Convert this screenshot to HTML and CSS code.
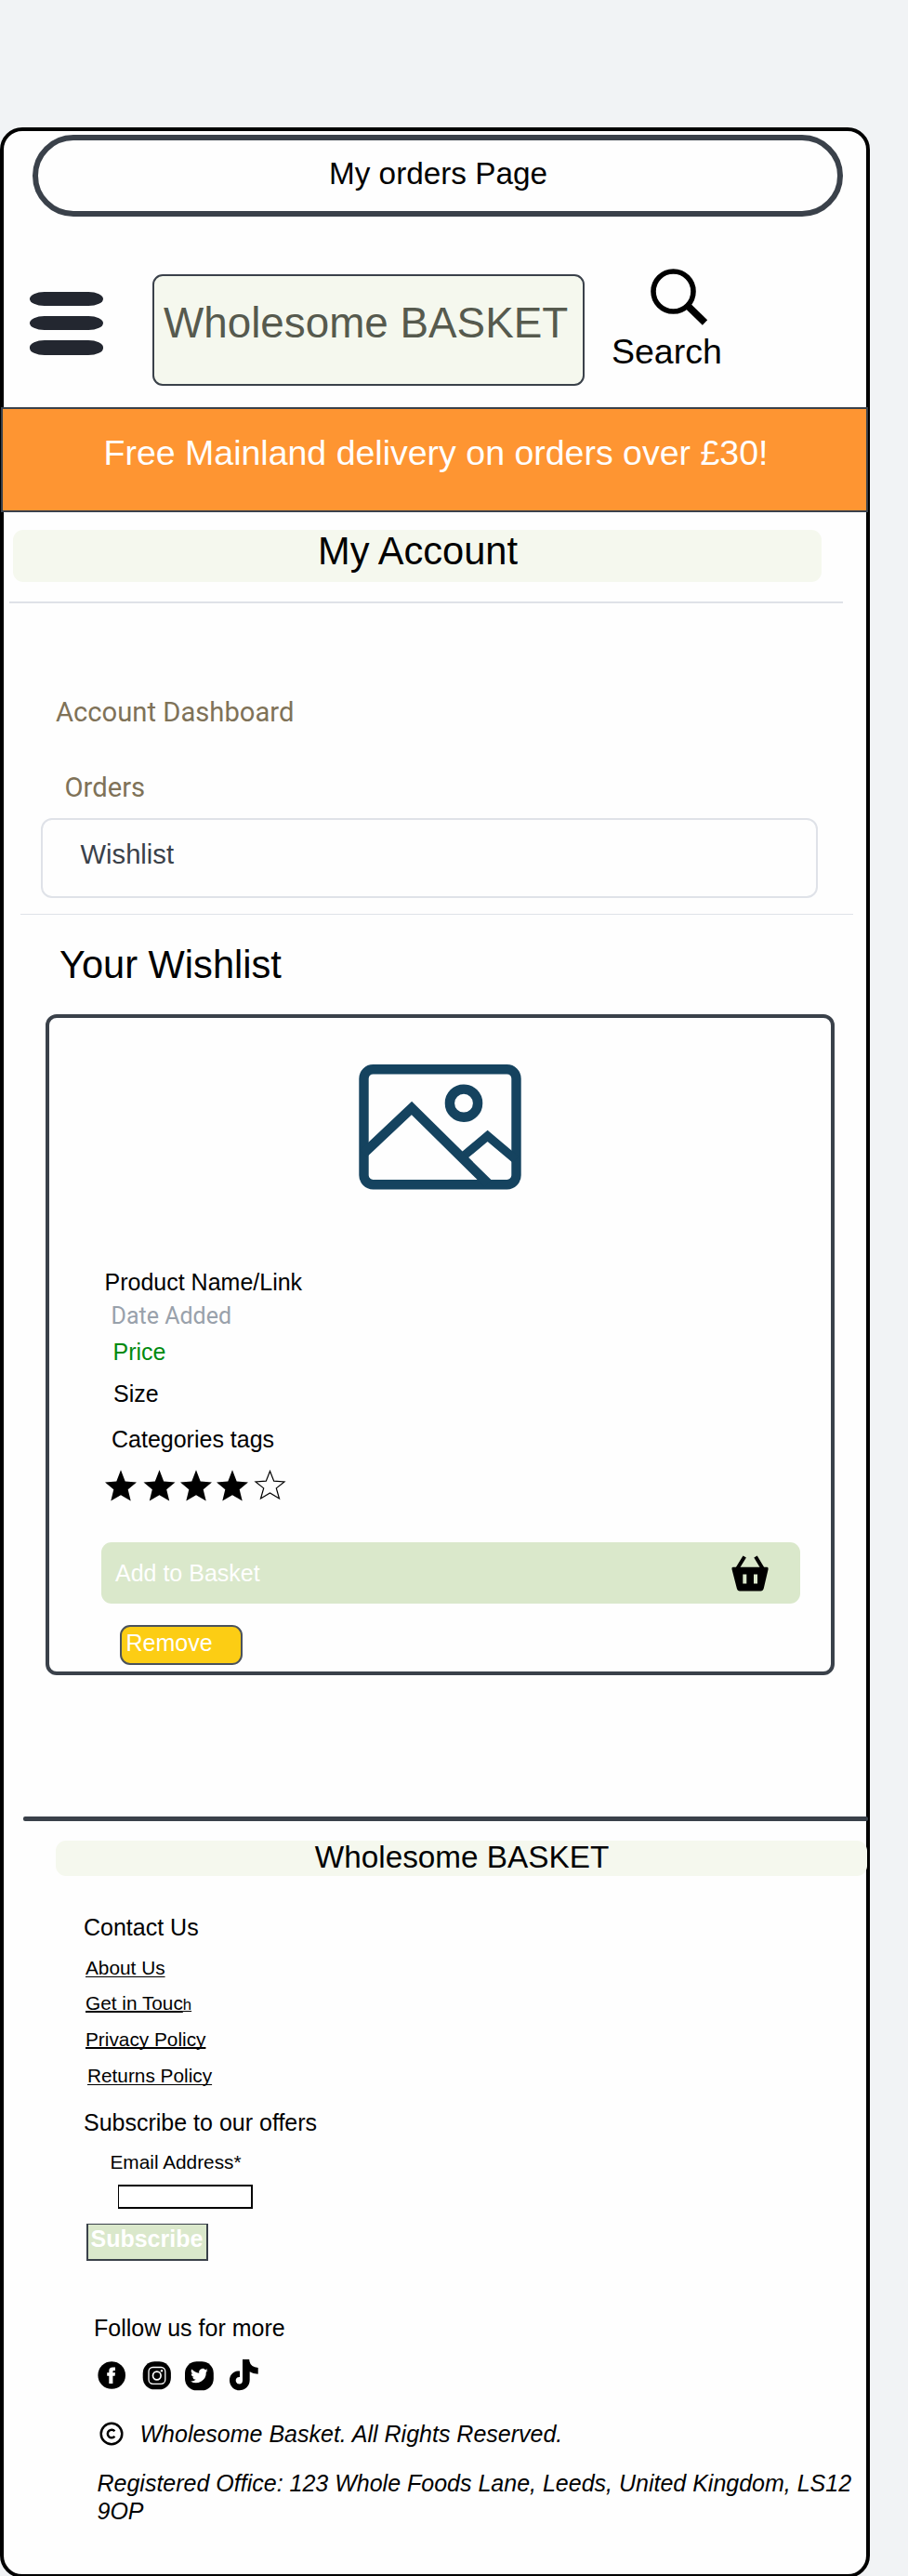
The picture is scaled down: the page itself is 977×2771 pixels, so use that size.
FILE: index.html
```html
<!DOCTYPE html>
<html lang="en">
<head>
<meta charset="utf-8">
<title>My orders Page</title>
<link rel="stylesheet" href="styles.css">
</head>
<body>
<main class="frame">
  <div class="page-title">My orders Page</div>
  <header class="header">
    <div class="menu"><span></span><span></span><span></span></div>
    <div class="brand">Wholesome BASKET</div>
    <div class="search">
      <svg class="search-icon" width="66" height="66" viewBox="0 0 66 66"><circle cx="25.500" cy="24.5" r="21.500" fill="none" stroke="#000" stroke-width="5.600"/><path d="M40 39 L59.500 58" stroke="#000" stroke-width="7.600"/></svg>
      <span>Search</span>
    </div>
  </header>
  <div class="banner">Free Mainland delivery on orders over £30!</div>
  <h1 class="account-bar">My Account</h1>
  <div class="rule rule-top"></div>
  <nav class="account-nav">
    <a class="dash">Account Dashboard</a>
    <a class="orders">Orders</a>
    <a class="current">Wishlist</a>
  </nav>
  <div class="rule rule-thin"></div>
  <h2 class="section-title">Your Wishlist</h2>
  <section class="card">
    <svg class="picture" width="175" height="135" viewBox="386 1145 175 135">
      <g fill="none" stroke="#15435f" stroke-width="10.400">
        <rect x="391.5" y="1150.2" width="164" height="124" rx="10"/>
        <circle cx="499" cy="1186.7" r="15.100"/>
        <path d="M391 1241 L443 1192 L525 1273"/>
        <path d="M500 1242.500 L524.600 1222 L555 1247.500" stroke-width="9.400"/>
      </g>
    </svg>
    <div class="product">Product Name/Link</div>
    <div class="date">Date Added</div>
    <div class="price">Price</div>
    <div class="size">Size</div>
    <div class="tags">Categories tags</div>
    <svg class="stars" width="200" height="34" viewBox="0 0 200 34">
      <defs><path id="star" d="M0 0 L4.700 12.200 L17 13.200 L7.700 21 L10.700 33.200 L0 27 L-10.700 33.200 L-7.700 21 L-17 13.200 L-4.700 12.200 Z"/></defs>
      <use href="#star" x="17" y=".3"/><use href="#star" x="58.500" y=".3"/><use href="#star" x="98" y=".3"/><use href="#star" x="137" y=".3"/>
      <path d="M177.500 1.500 L181.700 12.100 L193 12.900 L184.300 19.900 L187.500 31 L177.500 25 L167.500 31 L170.700 19.900 L162 12.900 L173.300 12.100 Z" fill="none" stroke="#000" stroke-width="1.200"/>
    </svg>
    <div class="add">
      <span>Add to Basket</span>
      <svg width="40" height="39" viewBox="0 0 40 39"><path d="M14.200 1.500 L6.500 14 M26 1.500 L33.500 14" stroke="#000" stroke-width="4"/><path fill-rule="evenodd" d="M1.500 12.800 H38.500 Q40 13 39.600 15 L34.800 35.500 Q34 38.500 31.500 38.500 H9 Q6.500 38.500 5.800 35.500 L.5 15 Q0 13 1.500 12.800 Z M12.300 20.500 V30.500 H16.300 V20.500 Z M24 20.500 V30.500 H28 V20.500 Z"/></svg>
    </div>
    <div class="remove">Remove</div>
  </section>
  <footer class="footer">
    <div class="footer-rule"></div>
    <div class="footer-brand">Wholesome BASKET</div>
    <h3 class="contact">Contact Us</h3>
    <a class="link about">About Us</a>
    <a class="link touch"><span class="u2">Get in Touc</span><span class="small">h</span></a>
    <a class="link privacy"><span class="u2">Privacy Policy</span></a>
    <a class="link returns">Returns Policy</a>
    <h3 class="offers">Subscribe to our offers</h3>
    <label class="email">Email Address*</label>
    <div class="field"></div>
    <div class="subscribe">Subscribe</div>
    <h3 class="follow">Follow us for more</h3>
    <svg class="social" width="176" height="36" viewBox="104 2536 176 36">
      <circle cx="120.200" cy="2555" r="14.800"/>
      <path fill="#fff" d="M117.300 2564 V2555.800 H115.200 V2552.300 H117.300 V2550.200 Q117.300 2546.600 121.300 2546.600 H124 V2550 H122.500 Q121.400 2550 121.400 2551.200 V2552.300 H124 L123.600 2555.800 H121.400 V2564 Z"/>
      <rect x="153.700" y="2540.300" width="30.200" height="30" rx="12.500"/>
      <rect x="160" y="2546.500" width="17.800" height="17.800" rx="4.500" fill="none" stroke="#fff" stroke-width="1.300"/>
      <circle cx="168.800" cy="2555.500" r="4.300" fill="none" stroke="#fff" stroke-width="1.700"/><circle cx="174" cy="2550.200" r="1.200" fill="#fff"/>
      <rect x="199" y="2540.300" width="30.800" height="31" rx="12.500"/>
      <path fill="#fff" transform="translate(205 2546.200) scale(.78)" d="M24 4.600a10 10 0 0 1-2.800.8 5 5 0 0 0 2.200-2.700c-1 .5-2 1-3.100 1.200a4.900 4.900 0 0 0-8.400 4.500C7.700 8.100 4.100 6.100 1.700 3.100a5 5 0 0 0 1.500 6.600c-.8 0-1.600-.3-2.200-.6a5 5 0 0 0 3.900 4.900c-.7.200-1.500.2-2.200.1a4.900 4.900 0 0 0 4.600 3.400A9.900 9.900 0 0 1 0 19.500a14 14 0 0 0 21.500-12.400c1-.7 1.800-1.600 2.500-2.500z"/>
      <path d="M261 2538 H268.200 Q268.600 2546.300 277.700 2547 V2553.700 Q272 2553.600 268.700 2551.300 V2560 C268.700 2567 263.500 2571.200 257.500 2571.200 C251.500 2571.200 247 2566.500 247 2560.500 C247 2554.500 251.500 2550.200 258 2550.500 V2557 C255.500 2556.600 253.700 2558.300 253.700 2560.600 C253.700 2563 255.400 2564.500 257.500 2564.500 C259.800 2564.500 261 2563 261 2560.500 Z"/>
    </svg>
    <div class="copyright">
      <svg width="26" height="26" viewBox="0 0 26 26" fill="none" stroke="#000"><circle cx="13" cy="13" r="11.300" stroke-width="2.500"/><path d="M16.400 10.200 A4.300 4.300 0 1 0 16.400 15.800" stroke-width="2.500"/></svg>
      <span>Wholesome Basket. All Rights Reserved.</span>
    </div>
    <address class="office">Registered Office: 123 Whole Foods Lane, Leeds, United Kingdom, LS12<br>9OP</address>
  </footer>
</main>
</body>
</html>
```

FILE: styles.css
```css
* { box-sizing: border-box; }
html, body { margin: 0; height: 2771px; overflow: hidden; }
body { background: #f1f3f5; font: 25px/28px "Liberation Sans", Arial, sans-serif; color: #000; padding-top: 137px; }
h1, h2, h3 { margin: 0; font-weight: 400; font-size: inherit; }
svg { display: block; flex: none; }
.frame { width: 935.5px; height: 2636px; border: 4px solid #000; border-radius: 24px; background: #fefefe; display: flex; flex-direction: column; align-items: flex-start; white-space: nowrap; }
.frame > * { flex: none; }
.page-title { margin: 4px 0 0 31px; width: 872px; height: 88px; border: 6px solid #3a414a; border-radius: 44px; padding: 17px 0 0 1px; text-align: center; font-size: 33.3px; line-height: 37px; }
.header { display: flex; align-items: flex-start; height: 205px; padding-left: 28px; }
.menu { display: flex; flex-direction: column; gap: 11px; margin-top: 81px; width: 78.5px; }
.menu span { height: 15.200px; background: #232730; border-radius: 16px / 7.600px; }
.brand { margin: 62px 0 0 53.500px; width: 465px; height: 120px; border: 2px solid #3a414a; border-radius: 11px; background: #f5f8ee; color: #565a4e; padding: 25px 0 0 10px; font-size: 45.8px; line-height: 51px; }
.search { margin: 56px 0 0 29px; font-size: 37.5px; line-height: 42px; }
.search-icon { margin: 0 0 2px 41px; }
.search span { display: block; }
.banner { margin-left: -3px; width: 933px; height: 113px; border: 2px solid #3a414a; background: #fe9532; color: #fff; padding: 26px 0 0 3px; text-align: center; font-size: 37.5px; line-height: 42px; }
.account-bar { margin: 19px 0 0 9.500px; width: 870px; height: 56px; padding-left: 2px; border-radius: 11px; background: #f5f8ee; text-align: center; font-size: 41.6px; line-height: 45px; }
.rule { background: #dfe2e8; }
.rule-top { margin: 21px 0 0 6px; width: 896.500px; height: 2px; }
.rule-thin { margin: 17px 0 0 18px; width: 896px; height: 1px; }
.account-nav { display: flex; flex-direction: column; font-size: 29.2px; line-height: 34px; }
.dash, .orders { font-family: Roboto, sans-serif; color: #7f7258; }
.dash { margin: 100px 0 0 56px; }
.orders { margin: 47px 0 0 65.500px; }
.current { margin: 16px 0 0 40px; width: 836px; height: 86px; border: 2px solid #dfe2e8; border-radius: 12px; padding: 21px 0 0 40.500px; line-height: 32px; color: #3a414a; }
.section-title { margin: 30px 0 0 60px; font-size: 41.6px; line-height: 47px; }
.card { margin: 30px 0 0 45px; width: 848.500px; height: 711px; border: 4px solid #3a414a; border-radius: 12px; }
.picture { margin: 50px 0 0 333px; }
.product { margin: 85px 0 0 59.500px; }
.date { margin: 8px 0 0 66.500px; font-family: Roboto, sans-serif; line-height: 29px; color: #99a1ab; }
.price { margin: 10px 0 0 68.500px; color: #008a0e; }
.size { margin: 17px 0 0 69px; }
.tags { margin: 21px 0 0 67px; }
.stars { margin: 19px 0 0 60px; }
.add { display: flex; justify-content: space-between; align-items: flex-start; margin: 44px 0 0 56px; width: 752px; height: 66px; padding: 14px 34.500px 0 15px; border-radius: 11px; background: #dae8cb; color: #fff; }
.add span { margin-top: 5px; }
.remove { margin: 23px 0 0 75.500px; width: 132.500px; height: 43px; border: 2px solid #4a525c; border-radius: 11px; background: #fccd14; color: #fff; padding: 3px 0 0 5px; }
.footer { display: flex; flex-direction: column; align-items: flex-start; }
.footer-rule { margin: 152px 0 0 20.500px; width: 909px; height: 5px; border-radius: 2px; background: #3a414a; }
.footer-brand { margin: 21px 0 0 56px; width: 873px; height: 38px; border-radius: 11px; background: #f5f8ee; padding-left: 1px; text-align: center; font-size: 33.3px; line-height: 35px; }
.contact { margin: 41px 0 0 86px; }
.link, .email { font-size: 20.8px; line-height: 23px; }
.link { text-decoration: underline 1px; text-underline-offset: 2px; text-decoration-skip-ink: none; }
.about { margin: 18px 0 0 88px; }
.touch { margin: 15px 0 0 88px; height: 23px; text-decoration: none; }
.privacy { margin: 16px 0 0 88px; text-decoration: none; }
.u2 { text-decoration: underline 2px; text-underline-offset: 1px; text-decoration-skip-ink: none; }
.small { font-size: 16.7px; text-decoration: underline 1px; text-underline-offset: 1px; }
.returns { margin: 16px 0 0 90px; }
.offers { margin: 25px 0 0 86px; }
.email { margin: 17px 0 0 114.500px; }
.field { margin: 13px 0 0 123px; width: 145px; height: 26px; border: 2px solid #000; border-left-width: 1px; background: #fff; }
.subscribe { margin: 16px 0 0 89px; width: 131px; height: 40px; border: 2px solid #3a414a; border-top-width: 1px; background: #dae8cb; color: #fff; font-weight: 700; padding: 1px 0 0 2.500px; }
.follow { margin: 58px 0 0 97px; }
.social { margin: 18px 0 0 100px; }
.copyright { display: flex; align-items: center; gap: 18px; margin: 32px 0 0 102.500px; height: 28px; font-style: italic; }
.office { margin: 24px 0 0 100.500px; line-height: 30px; font-style: italic; }
```
